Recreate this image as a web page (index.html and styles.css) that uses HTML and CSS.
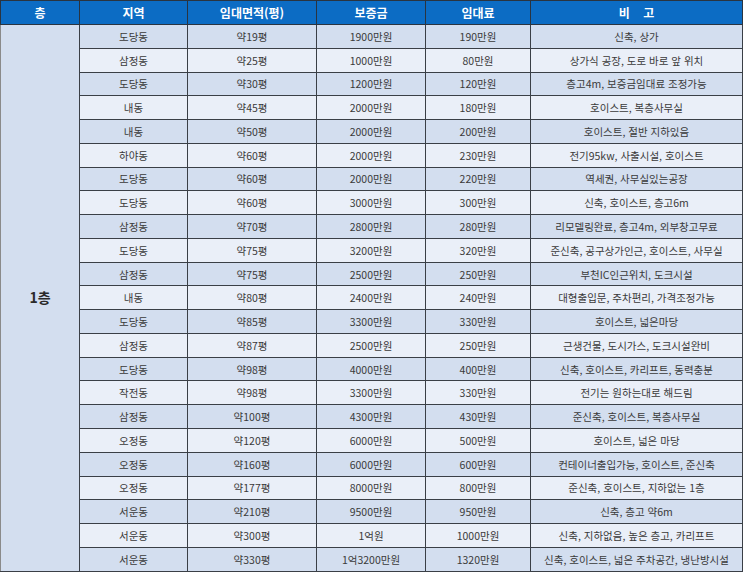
FILE: index.html
```html
<!DOCTYPE html>
<html lang="ko">
<head>
<meta charset="utf-8">
<link rel="stylesheet" href="styles.css">
</head>
<body>
<table class="rent">
  <colgroup>
    <col class="c1"><col class="c2"><col class="c3"><col class="c4"><col class="c5"><col class="c6">
  </colgroup>
  <thead>
    <tr><th>층</th><th>지역</th><th>임대면적(평)</th><th>보증금</th><th>임대료</th><th>비&nbsp;&nbsp;&nbsp;&nbsp;고</th></tr>
  </thead>
  <tbody>
    <tr class="d"><td class="floor" rowspan="23">1층</td><td>도당동</td><td>약19평</td><td>1900만원</td><td>190만원</td><td>신축, 상가</td></tr>
    <tr class="l"><td>삼정동</td><td>약25평</td><td>1000만원</td><td>80만원</td><td>상가식 공장, 도로 바로 앞 위치</td></tr>
    <tr class="d"><td>도당동</td><td>약30평</td><td>1200만원</td><td>120만원</td><td>층고4m, 보증금임대료 조정가능</td></tr>
    <tr class="l"><td>내동</td><td>약45평</td><td>2000만원</td><td>180만원</td><td>호이스트, 복층사무실</td></tr>
    <tr class="d"><td>내동</td><td>약50평</td><td>2000만원</td><td>200만원</td><td>호이스트, 절반 지하있음</td></tr>
    <tr class="l"><td>하야동</td><td>약60평</td><td>2000만원</td><td>230만원</td><td>전기95kw, 사출시설, 호이스트</td></tr>
    <tr class="d"><td>도당동</td><td>약60평</td><td>2000만원</td><td>220만원</td><td>역세권, 사무실있는공장</td></tr>
    <tr class="l"><td>도당동</td><td>약60평</td><td>3000만원</td><td>300만원</td><td>신축, 호이스트, 층고6m</td></tr>
    <tr class="d"><td>삼정동</td><td>약70평</td><td>2800만원</td><td>280만원</td><td>리모델링완료, 층고4m, 외부창고무료</td></tr>
    <tr class="l"><td>도당동</td><td>약75평</td><td>3200만원</td><td>320만원</td><td>준신축, 공구상가인근, 호이스트, 사무실</td></tr>
    <tr class="d"><td>삼정동</td><td>약75평</td><td>2500만원</td><td>250만원</td><td>부천IC인근위치, 도크시설</td></tr>
    <tr class="l"><td>내동</td><td>약80평</td><td>2400만원</td><td>240만원</td><td>대형출입문, 주차편리, 가격조정가능</td></tr>
    <tr class="d"><td>도당동</td><td>약85평</td><td>3300만원</td><td>330만원</td><td>호이스트, 넓은마당</td></tr>
    <tr class="l"><td>삼정동</td><td>약87평</td><td>2500만원</td><td>250만원</td><td>근생건물, 도시가스, 도크시설완비</td></tr>
    <tr class="d"><td>도당동</td><td>약98평</td><td>4000만원</td><td>400만원</td><td>신축, 호이스트, 카리프트, 동력충분</td></tr>
    <tr class="l"><td>작전동</td><td>약98평</td><td>3300만원</td><td>330만원</td><td>전기는 원하는대로 해드림</td></tr>
    <tr class="d"><td>삼정동</td><td>약100평</td><td>4300만원</td><td>430만원</td><td>준신축, 호이스트, 복층사무실</td></tr>
    <tr class="l"><td>오정동</td><td>약120평</td><td>6000만원</td><td>500만원</td><td>호이스트, 넓은 마당</td></tr>
    <tr class="d"><td>오정동</td><td>약160평</td><td>6000만원</td><td>600만원</td><td>컨테이너출입가능, 호이스트, 준신축</td></tr>
    <tr class="l"><td>오정동</td><td>약177평</td><td>8000만원</td><td>800만원</td><td>준신축, 호이스트, 지하없는 1층</td></tr>
    <tr class="d"><td>서운동</td><td>약210평</td><td>9500만원</td><td>950만원</td><td>신축, 층고 약6m</td></tr>
    <tr class="l"><td>서운동</td><td>약300평</td><td>1억원</td><td>1000만원</td><td>신축, 지하없음, 높은 층고, 카리프트</td></tr>
    <tr class="d"><td>서운동</td><td>약330평</td><td>1억3200만원</td><td>1320만원</td><td>신축, 호이스트, 넓은 주차공간, 냉난방시설</td></tr>
  </tbody>
</table>
</body>
</html>
```
FILE: styles.css
```css
html, body {
  margin: 0;
  padding: 0;
  background: #ffffff;
}
body {
  font-family: "Noto Sans CJK KR", "Noto Sans", sans-serif;
}
.rent {
  border-collapse: collapse;
  table-layout: fixed;
  width: 742px;
  border: 1px solid #7a7a7a;
}
.c1 { width: 79px; }
.c2 { width: 108px; }
.c3 { width: 129px; }
.c4 { width: 109px; }
.c5 { width: 105px; }
.c6 { width: 212px; }
.rent th {
  background: #0c6cc4;
  color: #ffffff;
  font-size: 12px;
  font-weight: 700;
  height: 23px;
  padding: 0;
  border: 1px solid #2a3440;
  text-align: center;
  line-height: 14px;
}
.rent td {
  height: 22.78px;
  padding: 0;
  border: 1px solid #3a3f46;
  font-size: 10.5px;
  color: #3a3a3a;
  text-align: center;
  line-height: 13px;
  white-space: nowrap;
}
.rent tr.d td { background: #d3deef; }
.rent tr.l td { background: #eaeff8; }
.rent td.floor {
  background: #d0dcef;
  font-size: 14px;
  font-weight: 700;
  color: #2a2a2a;
  border-left-color: #8a8a8a;
}
```
